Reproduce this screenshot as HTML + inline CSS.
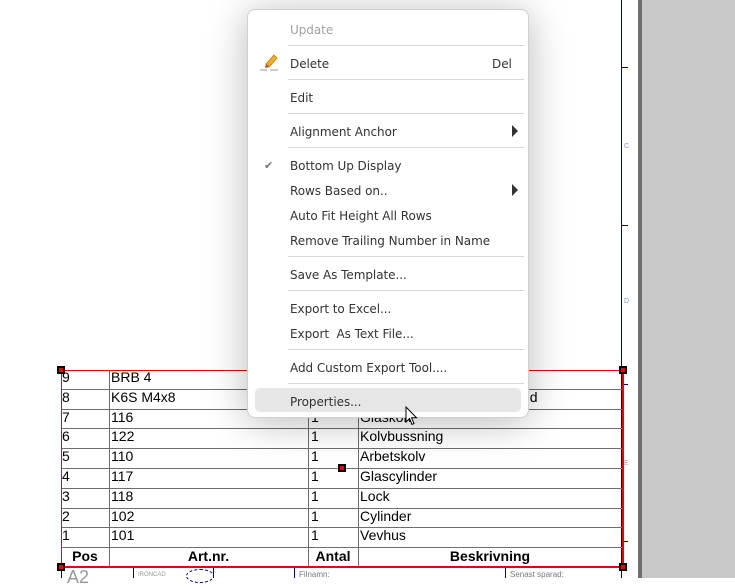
<!DOCTYPE html>
<html><head><meta charset="utf-8"><style>
*{margin:0;padding:0;box-sizing:border-box}
body{width:735px;height:578px;overflow:hidden;background:#fff;position:relative;font-family:"Liberation Sans",Arial,sans-serif}
.a{position:absolute}
.hl{position:absolute;height:1px;background:#6e6e6e}
.vl{position:absolute;width:1px;background:#6e6e6e}
.t{position:absolute;font-size:14px;color:#000;line-height:16px}
.h{position:absolute;font-size:14px;font-weight:bold;line-height:16px;text-align:center}
.hd{position:absolute;width:8px;height:8px;background:#e00;border:2px solid #000}
.m{position:absolute;left:290px;color:#333;font-family:"DejaVu Sans","Liberation Sans",sans-serif;font-size:12px;letter-spacing:-0.05px;line-height:14px}
.sep{position:absolute;left:288px;width:236px;height:1px;background:#d6d6d6}
.tick{position:absolute;left:622px;width:6px;height:1px;background:#00008b}
.lab{position:absolute;left:624px;font-size:7px;color:#8a9ab0}
</style></head><body>
<div class="a" style="left:638px;top:0;width:4px;height:578px;background:#6e6e6e"></div>
<div class="a" style="left:642px;top:0;width:93px;height:578px;background:#c8c8c8"></div>
<div class="a" style="left:621px;top:0;width:1px;height:578px;background:#00008b"></div>
<div class="tick" style="top:67px"></div>
<div class="tick" style="top:225px"></div>
<div class="tick" style="top:384px"></div>
<div class="tick" style="top:541px"></div>
<div class="lab" style="top:143px">C</div>
<div class="lab" style="top:298px">D</div>
<div class="lab" style="top:460px">E</div>

<div class="hl" style="left:61px;top:389px;width:562px"></div>
<div class="hl" style="left:61px;top:409px;width:562px"></div>
<div class="hl" style="left:61px;top:428px;width:562px"></div>
<div class="hl" style="left:61px;top:448px;width:562px"></div>
<div class="hl" style="left:61px;top:468px;width:562px"></div>
<div class="hl" style="left:61px;top:488px;width:562px"></div>
<div class="hl" style="left:61px;top:508px;width:562px"></div>
<div class="hl" style="left:61px;top:527px;width:562px"></div>
<div class="hl" style="left:61px;top:547px;width:562px"></div>
<div class="vl" style="left:109px;top:370px;height:197px"></div>
<div class="vl" style="left:308px;top:370px;height:197px"></div>
<div class="vl" style="left:358px;top:370px;height:197px"></div>
<div class="a" style="left:61px;top:370px;width:562px;height:1px;background:#e00"></div>
<div class="a" style="left:61px;top:566px;width:563px;height:2px;background:#e00"></div>
<div class="a" style="left:61px;top:370px;width:1px;height:197px;background:#e00"></div>
<div class="a" style="left:622px;top:370px;width:2px;height:197px;background:#e00"></div>

<div class="t" style="left:62px;top:369px">9</div><div class="t" style="left:111px;top:369px">BRB 4</div>
<div class="t" style="left:62px;top:389px">8</div><div class="t" style="left:111px;top:389px">K6S M4x8</div><div class="t" style="left:522px;top:389px">ud</div>
<div class="t" style="left:62px;top:409px">7</div><div class="t" style="left:111px;top:409px">116</div><div class="t" style="left:311px;top:409px">1</div><div class="t" style="left:360px;top:409px">Glaskolv</div>
<div class="t" style="left:62px;top:428px">6</div><div class="t" style="left:111px;top:428px">122</div><div class="t" style="left:311px;top:428px">1</div><div class="t" style="left:360px;top:428px">Kolvbussning</div>
<div class="t" style="left:62px;top:448px">5</div><div class="t" style="left:111px;top:448px">110</div><div class="t" style="left:311px;top:448px">1</div><div class="t" style="left:360px;top:448px">Arbetskolv</div>
<div class="t" style="left:62px;top:468px">4</div><div class="t" style="left:111px;top:468px">117</div><div class="t" style="left:311px;top:468px">1</div><div class="t" style="left:360px;top:468px">Glascylinder</div>
<div class="t" style="left:62px;top:488px">3</div><div class="t" style="left:111px;top:488px">118</div><div class="t" style="left:311px;top:488px">1</div><div class="t" style="left:360px;top:488px">Lock</div>
<div class="t" style="left:62px;top:508px">2</div><div class="t" style="left:111px;top:508px">102</div><div class="t" style="left:311px;top:508px">1</div><div class="t" style="left:360px;top:508px">Cylinder</div>
<div class="t" style="left:62px;top:527px">1</div><div class="t" style="left:111px;top:527px">101</div><div class="t" style="left:311px;top:527px">1</div><div class="t" style="left:360px;top:527px">Vevhus</div>
<div class="h" style="left:61px;top:548px;width:48px">Pos</div>
<div class="h" style="left:109px;top:548px;width:199px">Art.nr.</div>
<div class="h" style="left:308px;top:548px;width:50px">Antal</div>
<div class="h" style="left:358px;top:548px;width:264px">Beskrivning</div>

<div class="a" style="left:61px;top:568px;width:1px;height:10px;background:#00008b"></div>
<div class="a" style="left:133px;top:568px;width:1px;height:10px;background:#00008b"></div>
<div class="a" style="left:213px;top:568px;width:1px;height:10px;background:#00008b"></div>
<div class="a" style="left:294px;top:568px;width:1px;height:10px;background:#00008b"></div>
<div class="a" style="left:505px;top:568px;width:1px;height:10px;background:#00008b"></div>
<div class="a" style="left:67px;top:567px;font-size:18px;color:#999;line-height:20px">A2</div>
<div class="a" style="left:138px;top:572px;font-size:6px;color:#999">IRONCAD</div>
<div class="a" style="left:186px;top:569px;width:28px;height:14px;border:1px dashed #00008b;border-radius:50%"></div>
<div class="a" style="left:299px;top:570px;font-size:8px;color:#778">Filnamn:</div>
<div class="a" style="left:510px;top:570px;font-size:8px;color:#778">Senast sparad:</div>

<div class="hd" style="left:57px;top:366px"></div>
<div class="hd" style="left:619px;top:366px"></div>
<div class="hd" style="left:57px;top:563px"></div>
<div class="hd" style="left:619px;top:563px"></div>
<div class="hd" style="left:338px;top:464px"></div>

<div class="a" style="left:247px;top:9px;width:282px;height:409px;background:#fff;border:1px solid #d0d0d0;border-radius:8px;box-shadow:0 4px 40px rgba(0,0,0,0.28)"></div>
<div class="a" style="left:255px;top:388px;width:266px;height:24px;background:#e6e6e6;border-radius:5px"></div>
<div class="m" style="top:23px;color:#a0a0a0">Update</div>
<div class="sep" style="top:45px"></div>
<svg class="a" style="left:259px;top:53px" width="20" height="18" viewBox="0 0 20 18">
<path d="M7 11 L15 2 L18 5 L10 14 Z" fill="#f0b020" stroke="#c07800" stroke-width="0.8"/>
<path d="M7 11 L10 14 L6 15 Z" fill="#a05030"/>
<path d="M1 17 H8 M11 17 H19" stroke="#999" stroke-width="1"/>
</svg>
<div class="m" style="top:57px">Delete</div>
<div class="m" style="top:57px;left:492px">Del</div>
<div class="sep" style="top:79px"></div>
<div class="m" style="top:91px">Edit</div>
<div class="sep" style="top:113px"></div>
<div class="m" style="top:125px">Alignment Anchor</div>
<div class="a" style="left:512px;top:125px;width:0;height:0;border-left:6px solid #333;border-top:6px solid transparent;border-bottom:6px solid transparent"></div>
<div class="sep" style="top:147px"></div>
<div class="a" style="left:264px;top:159px;font-size:11px;color:#777">✔</div>
<div class="m" style="top:159px">Bottom Up Display</div>
<div class="m" style="top:184px">Rows Based on..</div>
<div class="a" style="left:512px;top:184px;width:0;height:0;border-left:6px solid #333;border-top:6px solid transparent;border-bottom:6px solid transparent"></div>
<div class="m" style="top:209px">Auto Fit Height All Rows</div>
<div class="m" style="top:234px">Remove Trailing Number in Name</div>
<div class="sep" style="top:256px"></div>
<div class="m" style="top:268px">Save As Template...</div>
<div class="sep" style="top:290px"></div>
<div class="m" style="top:302px">Export to Excel...</div>
<div class="m" style="top:327px">Export&nbsp; As Text File...</div>
<div class="sep" style="top:349px"></div>
<div class="m" style="top:361px">Add Custom Export Tool....</div>
<div class="sep" style="top:383px"></div>
<div class="m" style="top:395px">Properties...</div>
<svg class="a" style="left:405px;top:406px" width="14" height="22" viewBox="0 0 14 22">
<path d="M1 1 L1 16 L4.5 12.5 L7 18.5 L9 17.5 L6.5 11.8 L11.5 11.8 Z" fill="#fff" stroke="#000" stroke-width="1"/>
</svg>
</body></html>
